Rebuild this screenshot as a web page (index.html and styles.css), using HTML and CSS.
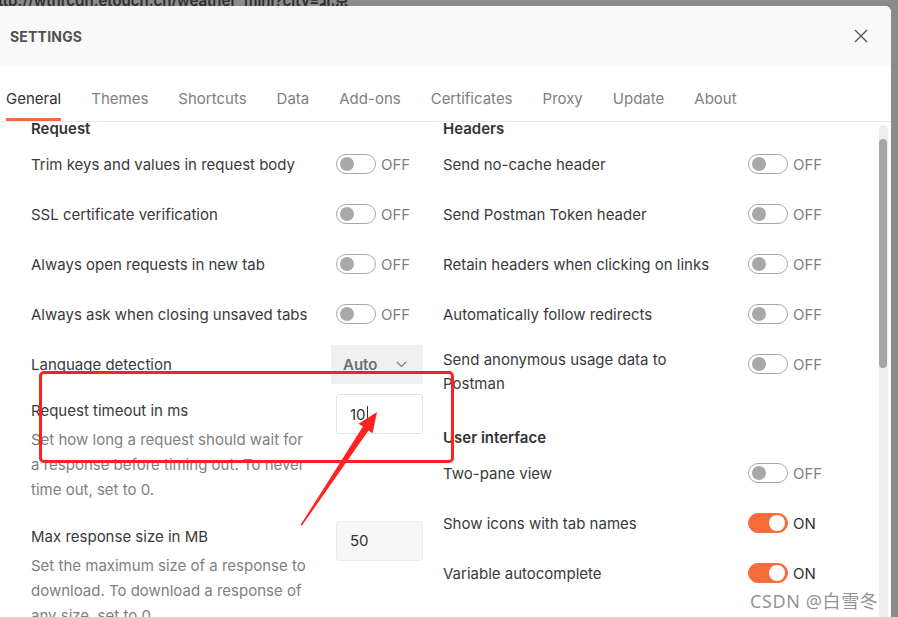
FILE: index.html
```html
<!DOCTYPE html>
<html>
<head>
<meta charset="utf-8">
<link rel="stylesheet" href="styles.css">
</head>
<body>
<div class="backdrop-url">ttp://wthrcdn.etouch.cn/weather_mini?city=北京</div>
<div class="modal">
  <div class="modal-header">
    <span class="modal-title">SETTINGS</span>
    <svg class="close" width="14" height="14" viewBox="0 0 14 14"><path d="M1 1 L13 13 M13 1 L1 13" stroke="#555" stroke-width="1.4" fill="none"/></svg>
  </div>
  <div class="tabs">
    <span class="tab active">General</span>
    <span class="tab">Themes</span>
    <span class="tab">Shortcuts</span>
    <span class="tab">Data</span>
    <span class="tab">Add-ons</span>
    <span class="tab">Certificates</span>
    <span class="tab">Proxy</span>
    <span class="tab">Update</span>
    <span class="tab">About</span>
  </div>
  <div class="content">
    <div class="columns">
      <div class="col">
        <div class="section-title">Request</div>
        <div class="row"><span class="label">Trim keys and values in request body</span><span class="ctrl"><span class="toggle"></span><span class="state">OFF</span></span></div>
        <div class="row"><span class="label">SSL certificate verification</span><span class="ctrl"><span class="toggle"></span><span class="state">OFF</span></span></div>
        <div class="row"><span class="label">Always open requests in new tab</span><span class="ctrl"><span class="toggle"></span><span class="state">OFF</span></span></div>
        <div class="row"><span class="label">Always ask when closing unsaved tabs</span><span class="ctrl"><span class="toggle"></span><span class="state">OFF</span></span></div>
        <div class="row"><span class="label">Language detection</span><span class="ctrl"><span class="select">Auto<svg width="11" height="7" viewBox="0 0 11 7"><path d="M1 1 L5.5 5.5 L10 1" stroke="#777" stroke-width="1.2" fill="none"/></svg></span></span></div>
        <div class="block">
          <div class="block-text">
            <div class="label">Request timeout in ms</div>
            <div class="desc">Set how long a request should wait for a response before timing out. To never time out, set to 0.</div>
          </div>
          <div class="ctrl"><div class="input">10<span class="caret"></span></div></div>
        </div>
        <div class="block">
          <div class="block-text">
            <div class="label">Max response size in MB</div>
            <div class="desc">Set the maximum size of a response to download. To download a response of any size, set to 0.</div>
          </div>
          <div class="ctrl"><div class="input filled">50</div></div>
        </div>
      </div>
      <div class="col">
        <div class="section-title">Headers</div>
        <div class="row"><span class="label">Send no-cache header</span><span class="ctrl"><span class="toggle"></span><span class="state">OFF</span></span></div>
        <div class="row"><span class="label">Send Postman Token header</span><span class="ctrl"><span class="toggle"></span><span class="state">OFF</span></span></div>
        <div class="row"><span class="label">Retain headers when clicking on links</span><span class="ctrl"><span class="toggle"></span><span class="state">OFF</span></span></div>
        <div class="row"><span class="label">Automatically follow redirects</span><span class="ctrl"><span class="toggle"></span><span class="state">OFF</span></span></div>
        <div class="row two-line"><span class="label">Send anonymous usage data to Postman</span><span class="ctrl"><span class="toggle"></span><span class="state">OFF</span></span></div>
        <div class="section-title second">User interface</div>
        <div class="row"><span class="label">Two-pane view</span><span class="ctrl"><span class="toggle"></span><span class="state">OFF</span></span></div>
        <div class="row"><span class="label">Show icons with tab names</span><span class="ctrl"><span class="toggle on"></span><span class="state on">ON</span></span></div>
        <div class="row"><span class="label">Variable autocomplete</span><span class="ctrl"><span class="toggle on"></span><span class="state on">ON</span></span></div>
      </div>
    </div>
    <div class="scrollbar"><div class="thumb"></div></div>
  </div>
</div>
<div class="annot-box"></div>
<svg class="annot-arrow" width="898" height="617" viewBox="0 0 898 617"><polygon points="300.5,525 362.9,426.6 358.6,423.8 377,412 372.6,433.2 368.5,430.4 302,525.6" fill="#ff2222"/></svg>
<div class="watermark">CSDN @白雪冬</div>
</body>
</html>
```

FILE: styles.css
```css
* { box-sizing: border-box; }
html, body { margin: 0; padding: 0; }
body {
  width: 898px;
  height: 617px;
  overflow: hidden;
  background: #8b8b8b;
  font-family: Inter, "Noto Sans", "Noto Sans CJK SC", sans-serif;
  position: relative;
  padding-top: 6px;
}
.backdrop-url {
  position: absolute;
  left: -2px;
  top: -11px;
  font-size: 15px;
  font-weight: 600;
  color: #2e2e2e;
  white-space: nowrap;
}
.modal {
  width: 891px;
  height: 611px;
  background: #fff;
  border-top-right-radius: 6px;
  overflow: hidden;
  position: relative;
}
.modal-header {
  height: 60px;
  background: #f9f9f9;
  display: flex;
  align-items: center;
  padding-left: 10px;
  padding-right: 23px;
}
.modal-title {
  font-size: 14px;
  font-weight: 700;
  color: #505050;
  letter-spacing: 0.2px;
}
.close { margin-left: auto; }
.tabs {
  height: 56px;
  border-bottom: 1px solid #e8e8e8;
  display: flex;
  align-items: flex-end;
  gap: 30px;
  padding-left: 6px;
}
.tab {
  font-size: 15px;
  line-height: 20px;
  color: #808080;
  padding-bottom: 9px;
  border-bottom: 3px solid transparent;
}
.tab.active {
  color: #333;
  border-bottom-color: #f26b3a;
}
.content {
  display: flex;
  height: 495px;
  overflow: hidden;
}
.columns {
  display: flex;
  gap: 20px;
  padding-left: 31px;
}
.col {
  width: 392px;
}
.section-title {
  font-size: 15px;
  font-weight: 600;
  color: #333;
  line-height: 14px;
  height: 17px;
}
.section-title.second {
  margin-top: 39px;
  line-height: 20px;
  height: 20px;
}
.row {
  height: 50px;
  display: flex;
  align-items: center;
}
.label {
  font-size: 15px;
  color: #3a3a3a;
  line-height: 24px;
}
.ctrl {
  width: 87px;
  margin-left: auto;
  display: flex;
  align-items: center;
  flex-shrink: 0;
}
.row .label { flex: 1; }
.row > .label { padding-top: 1px; }
.two-line { align-items: flex-start; }
.two-line .label { padding-top: 9px; padding-right: 40px; }
.two-line .ctrl { margin-top: 15px; }
.toggle {
  width: 40px;
  height: 20px;
  border: 1px solid #a8a8a8;
  border-radius: 10px;
  position: relative;
  display: inline-block;
}
.toggle::after {
  content: "";
  position: absolute;
  left: 3px;
  top: 2px;
  width: 14px;
  height: 14px;
  border-radius: 50%;
  background: #a8a8a8;
}
.toggle.on {
  background: #f76a3a;
  border-color: #f76a3a;
}
.toggle.on::after {
  left: auto;
  right: 2px;
  top: 1px;
  width: 16px;
  height: 16px;
  background: #fff;
}
.state {
  font-size: 15px;
  color: #808080;
  margin-left: 5px;
}
.state.on { color: #333; }
.select {
  margin-left: -5px;
  width: 92px;
  height: 39px;
  background: #f0f0f0;
  display: flex;
  align-items: center;
  justify-content: space-between;
  padding: 0 16px 0 12px;
  font-size: 15px;
  font-weight: 600;
  color: #6e6e6e;
}
.block {
  display: flex;
  align-items: flex-start;
  padding-top: 5px;
}
.block-text {
  flex: 1;
  padding-top: 3.5px;
  padding-bottom: 14px;
}
.block-text .label { line-height: 25px; }
.desc {
  margin-top: 4px;
  font-size: 15px;
  line-height: 25px;
  color: #808080;
  width: 278px;
}
.input {
  width: 87px;
  height: 40px;
  border: 1px solid #e3e3e3;
  border-radius: 3px;
  font-size: 15px;
  color: #333;
  display: flex;
  align-items: center;
  padding-left: 13px;
}
.input.filled {
  background: #f7f7f7;
  border-color: #ececec;
}
.caret {
  display: inline-block;
  width: 1px;
  height: 17px;
  background: #333;
  margin-left: 1px;
}
.scrollbar {
  margin-left: auto;
  margin-right: 3px;
  margin-top: 3px;
  width: 9px;
  background: #eeeeee;
  border-radius: 4px 4px 0 0;
  padding-top: 14px;
}
.thumb {
  width: 8px;
  height: 229px;
  background: #a6a6a6;
  border-radius: 4px;
}
.annot-box {
  position: absolute;
  left: 39px;
  top: 371px;
  width: 415px;
  height: 92px;
  border: 3px solid #ff2020;
  border-radius: 5px;
}
.annot-arrow {
  position: absolute;
  left: 0;
  top: 0;
}
.watermark {
  position: absolute;
  left: 750px;
  top: 587px;
  font-size: 18px;
  letter-spacing: 0.6px;
  color: rgba(110, 110, 110, 0.75);
  font-family: "Noto Sans", "Noto Sans CJK SC", sans-serif;
  white-space: nowrap;
}
```
